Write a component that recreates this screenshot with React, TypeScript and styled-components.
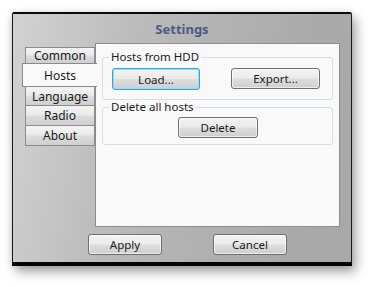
import React from "react";
import styled, { createGlobalStyle } from "styled-components";

const Global = createGlobalStyle`
  html, body { margin: 0; padding: 0; background: #ffffff; }
  body { font-family: "Noto Sans", "Open Sans", sans-serif; font-size: 11.5px; color: #1a1a1a; }
`;

const Stage = styled.div`
  width: 372px;
  height: 287px;
  padding: 12px 0 0 12px;
  box-sizing: border-box;
`;

const Window = styled.div`
  width: 340px;
  height: 254px;
  box-sizing: border-box;
  border: 1px solid #1a1a1a;
  border-top: 2px solid #0a0a0a;
  border-bottom: 4px solid #050505;
  border-radius: 2px 2px 0 0;
  background: linear-gradient(100deg, #d2d2d2 0%, #c6c6c6 18%, #bdbdbd 30%, #b2b2b2 55%, #aaaaaa 80%, #a8a8a8 100%);
  box-shadow: 4px 6px 12px rgba(0, 0, 0, 0.35), -1px 1px 6px rgba(0,0,0,0.12);
  display: flex;
  flex-direction: column;
`;

const Title = styled.div`
  height: 29px;
  display: flex;
  align-items: center;
  justify-content: center;
  font-weight: bold;
  font-size: 13px;
  color: #4b5a85;
`;

const Body = styled.div`
  height: 184px;
  display: flex;
  padding: 0 11px 0 12px;
`;

const TabColumn = styled.div`
  width: 70px;
  padding-top: 4px;
  display: flex;
  flex-direction: column;
  position: relative;
  z-index: 2;
`;

const Tab = styled.div<{ $h: number; $selected?: boolean }>`
  height: ${(p) => p.$h}px;
  box-sizing: border-box;
  display: flex;
  align-items: center;
  justify-content: center;
  border: 1px solid #8c8c8c;
  margin-top: -1px;
  ${(p) =>
    p.$selected
      ? `background: #fafafa; margin-left: -3px; margin-right: -2px; border-right: none;`
      : `background: linear-gradient(#f4f4f4 0%, #ebebeb 45%, #dcdcdc 55%, #cfcfcf 100%);`}
  font-size: 12px;
  &:first-child { margin-top: 0; }
`;

const Panel = styled.div`
  flex: 1;
  background: #f9f9f9;
  border: 1px solid #8e8e8e;
  box-sizing: border-box;
  padding: 6px 6px 0 6px;
  display: flex;
  flex-direction: column;
`;

const Group = styled.fieldset<{ $h: number }>`
  margin: 0;
  height: ${(p) => p.$h}px;
  box-sizing: border-box;
  border: 1px solid #d8dde2;
  border-radius: 3px;
  padding: 0 8px;
  min-width: 0;
`;

const Legend = styled.legend`
  padding: 0 2px;
  margin-left: -2px;
  font-size: 11.5px;
  line-height: 14px;
`;

const Row = styled.div<{ $pl: number; $gap: number; $pt: number }>`
  display: flex;
  padding-left: ${(p) => p.$pl}px;
  padding-top: ${(p) => p.$pt}px;
  gap: ${(p) => p.$gap}px;
  align-items: flex-start;
`;

const Button = styled.div<{ $w: number; $h?: number; $focus?: boolean }>`
  width: ${(p) => p.$w}px;
  height: ${(p) => p.$h ?? 21}px;
  box-sizing: border-box;
  border-radius: 3px;
  border: 1px solid ${(p) => (p.$focus ? "#2ba9dc" : "#707070")};
  background: linear-gradient(#f3f3f3 0%, #ebebeb 48%, #dddddd 52%, #cfcfcf 100%);
  ${(p) => (p.$focus ? "box-shadow: inset 0 0 0 1px #8fdcf6;" : "box-shadow: inset 0 0 0 1px rgba(255,255,255,0.6);")}
  display: flex;
  align-items: center;
  justify-content: center;
  font-size: 11.5px;
`;

const Footer = styled.div`
  flex: 1;
  display: flex;
  padding: 7px 0 0 75px;
  gap: 51px;
`;

export default function App() {
  return (
    <>
      <Global />
      <Stage>
        <Window>
          <Title>Settings</Title>
          <Body>
            <TabColumn>
              <Tab $h={17}>Common</Tab>
              <Tab $h={24} $selected>Hosts</Tab>
              <Tab $h={20}>Language</Tab>
              <Tab $h={21}>Radio</Tab>
              <Tab $h={21}>About</Tab>
            </TabColumn>
            <Panel>
              <Group $h={50}>
                <Legend>Hosts from HDD</Legend>
                <Row $pl={1} $gap={31} $pt={4}>
                  <Button $w={88} $h={22} $focus>Load...</Button>
                  <Button $w={89}>Export...</Button>
                </Row>
              </Group>
              <Group $h={45}>
                <Legend>Delete all hosts</Legend>
                <Row $pl={67} $gap={0} $pt={3}>
                  <Button $w={80}>Delete</Button>
                </Row>
              </Group>
            </Panel>
          </Body>
          <Footer>
            <Button $w={74}>Apply</Button>
            <Button $w={74}>Cancel</Button>
          </Footer>
        </Window>
      </Stage>
    </>
  );
}
